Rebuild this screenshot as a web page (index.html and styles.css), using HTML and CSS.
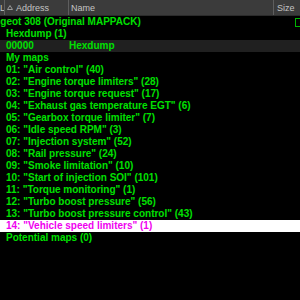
FILE: index.html
```html
<html lang="en">

<head>
    <meta charset="UTF-8">
    <meta name="viewport" content="width=device-width, initial-scale=1.0">
    <title>Map tree</title>
    <link rel="stylesheet" href="styles.css">
</head>

<body>
    <div class="grid">
        <div class="head">
            <div class="col col-first">L</div>
            <div class="col">
                <svg class="sort" width="6" height="5" viewBox="0 0 6 5">
                    <path d="M0.5 4.5 L3 0.5 L5.5 4.5 Z" fill="none" stroke="#9a9a9a" stroke-width="1" />
                </svg>
                Address
            </div>
            <div class="col">Name</div>
            <div class="col col-last">Size</div>
        </div>

        <div class="tree">
            <div class="row root">
                <span class="label">Peugeot 308 (Original MAPPACK)</span>
                <span class="focus-box"></span>
            </div>
            <div class="row">Hexdump (1)</div>
            <div class="row alt">
                <span class="cell-addr">00000</span>
                <span class="cell-name">Hexdump</span>
            </div>
            <div class="row">My maps</div>
            <div class="row">01: "Air control" (40)</div>
            <div class="row">02: "Engine torque limiters" (28)</div>
            <div class="row">03: "Engine torque request" (17)</div>
            <div class="row">04: "Exhaust gas temperature EGT" (6)</div>
            <div class="row">05: "Gearbox torque limiter" (7)</div>
            <div class="row">06: "Idle speed RPM" (3)</div>
            <div class="row">07: "Injection system" (52)</div>
            <div class="row">08: "Rail pressure" (24)</div>
            <div class="row">09: "Smoke limitation" (10)</div>
            <div class="row">10: "Start of injection SOI" (101)</div>
            <div class="row">11: "Torque monitoring" (1)</div>
            <div class="row">12: "Turbo boost pressure" (56)</div>
            <div class="row">13: "Turbo boost pressure control" (43)</div>
            <div class="row selected">14: "Vehicle speed limiters" (1)</div>
            <div class="row">Potential maps (0)</div>
        </div>
    </div>
</body>

</html>
```

FILE: styles.css
```css
body {
    margin: 0;
    width: 300px;
    height: 300px;
    overflow: hidden;
    background: #000;
}

.grid {
    display: flex;
    flex-direction: column;
    width: 300px;
}

.head {
    display: grid;
    grid-template-columns: 5px 64px 205px 26px;
    height: 15px;
    background: #3b3b3b;
    border-bottom: 1px solid #2b2b2b;
    font-family: "Liberation Sans", Arial, sans-serif;
    font-size: 9px;
    color: #c4c4c4;
}

.col {
    display: flex;
    align-items: center;
    gap: 3px;
    padding-left: 2px;
    border-right: 1px solid #5e5e5e;
    white-space: nowrap;
    overflow: hidden;
}

.col-first {
    padding-left: 0;
}

.col-last {
    padding-left: 3px;
    border-right: none;
}

.sort {
    margin-bottom: 1px;
}

.tree {
    display: flex;
    flex-direction: column;
    overflow: hidden;
    font-family: "Liberation Sans", Arial, sans-serif;
    font-size: 10px;
    font-weight: bold;
    color: #00e000;
}

.row {
    height: 12px;
    line-height: 12px;
    padding-left: 6px;
    white-space: nowrap;
}

.root {
    display: flex;
    justify-content: space-between;
    align-items: center;
    padding-left: 0;
}

.root .label {
    margin-left: -18px;
}

.focus-box {
    width: 7px;
    height: 7px;
    margin-right: -4px;
    border: 1px solid #00b400;
}

.alt {
    display: flex;
    background: #202020;
}

.cell-addr {
    width: 63px;
}

.selected {
    background: #fff;
    color: #f000f0;
}
```
